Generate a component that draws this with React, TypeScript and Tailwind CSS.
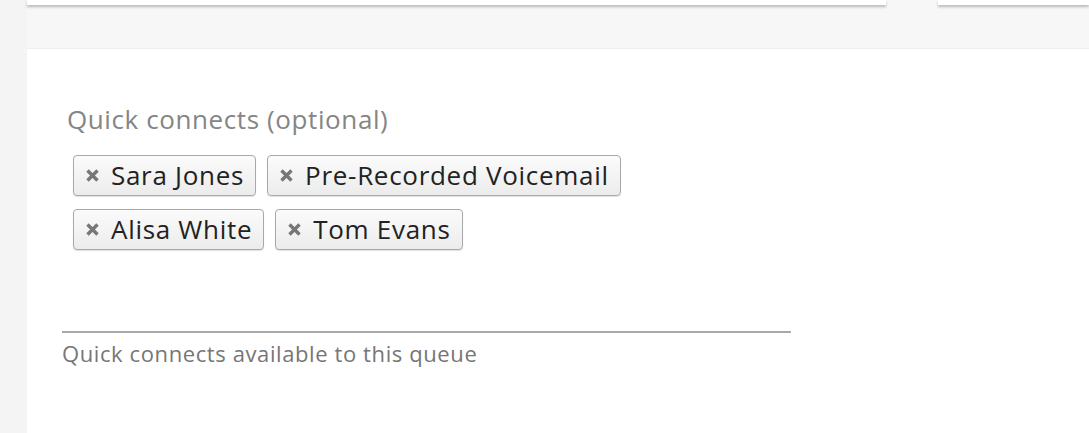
const tagRows = [
  ['Sara Jones', 'Pre-Recorded Voicemail'],
  ['Alisa White', 'Tom Evans'],
];

function RemoveIcon() {
  return (
    <svg width="15" height="15" viewBox="0 0 15 15" className="shrink-0">
      <path d="M2.5 2.5 L12.5 12.5 M12.5 2.5 L2.5 12.5" stroke="#777" strokeWidth="3.4" />
    </svg>
  );
}

function Tag({ label }: { label: string }) {
  return (
    <span className="flex items-center gap-[11px] h-[41px] pl-[11px] pr-[11px] rounded-[4px] border border-[#a9a9a9] bg-gradient-to-b from-[#fbfbfb] to-[#ececec] shadow-[0_1px_1px_rgba(0,0,0,0.12)] text-[26px] tracking-[0.7px] text-[#222] leading-none">
      <RemoveIcon />
      <span className="pb-[2px]">{label}</span>
    </span>
  );
}

export default function App() {
  return (
    <div
      className="flex w-[1089px] h-[433px] bg-[#f4f4f4] overflow-hidden"
      style={{ fontFamily: '"Open Sans", "Noto Sans", sans-serif' }}
    >
      <div className="w-[27px] shrink-0" />
      <div className="flex flex-col flex-1 min-w-0">
        <div className="flex h-[49px] shrink-0 gap-[52px] bg-[#f7f7f7] border-b border-[#efefef]">
          <div className="w-[859px] h-[5px] bg-white shadow-[0_2px_3px_rgba(0,0,0,0.25)]" />
          <div className="flex-1 h-[5px] bg-white shadow-[0_2px_3px_rgba(0,0,0,0.25)]" />
        </div>
        <div className="flex-1 bg-white pl-[35px] pt-[53px]">
          <div className="pl-[5px] text-[26px] tracking-[0.6px] text-[#858585] leading-[34px]">Quick connects (optional)</div>
          <div className="flex flex-col gap-[13px] mt-[19px] pl-[11px]">
            {tagRows.map((row, i) => (
              <div key={i} className="flex gap-[11px]">
                {row.map((t) => (
                  <Tag key={t} label={t} />
                ))}
              </div>
            ))}
          </div>
          <div className="w-[729px] h-[2px] bg-[#a8a8a8] mt-[81px]" />
          <div className="mt-[6px] text-[22px] tracking-[0.6px] text-[#767676] leading-[28px]">Quick connects available to this queue</div>
        </div>
      </div>
    </div>
  );
}
